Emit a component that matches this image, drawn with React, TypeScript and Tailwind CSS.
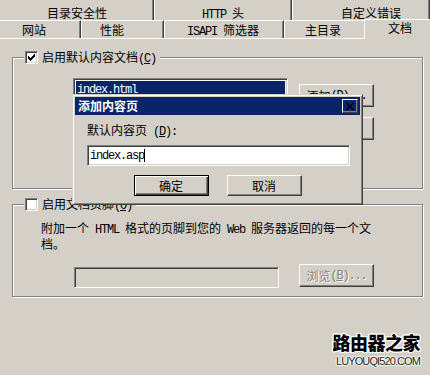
import React from "react";

// Win2000 classic 3D edges
const raised =
  "border border-t-white border-l-white border-r-[#404040] border-b-[#404040] shadow-[inset_-1px_-1px_#808080]";
const defBtn =
  "border border-black shadow-[inset_1px_1px_#fff,inset_-1px_-1px_#404040,inset_-2px_-2px_#808080]";
const sunken =
  "border border-t-[#808080] border-l-[#808080] border-r-white border-b-white shadow-[inset_1px_1px_#404040,inset_-1px_-1px_#d4d0c8]";
const etched = "border border-[#808080] shadow-[inset_1px_1px_#fff,1px_1px_#fff]";
const tabEdge =
  "border-r border-r-[#404040] shadow-[inset_-1px_0_#808080]";

// half-width latin run (SimSun style, 6px per char)
function L({ children }: { children: React.ReactNode }) {
  return (
    <span className="font-['Liberation_Mono',monospace] text-[12px] tracking-[-1.2px]">
      {children}
    </span>
  );
}

function Check({ checked }: { checked?: boolean }) {
  return (
    <div className={`w-[13px] h-[13px] shrink-0 bg-white flex items-center justify-center ${sunken}`}>
      {checked && (
        <svg width="7" height="7" viewBox="0 0 7 7" shapeRendering="crispEdges">
          <path
            d="M0 2h1v3H0zM1 3h1v3H1zM2 4h1v3H2zM3 3h1v3H3zM4 2h1v3H4zM5 1h1v3H5zM6 0h1v3H6z"
            fill="#000"
          />
        </svg>
      )}
    </div>
  );
}

function Btn({
  children,
  className = "",
  isDefault,
  disabled,
}: {
  children: React.ReactNode;
  className?: string;
  isDefault?: boolean;
  disabled?: boolean;
}) {
  return (
    <div
      className={`flex items-center justify-center bg-[#d4d0c8] leading-[12px] whitespace-nowrap ${
        isDefault ? defBtn : raised
      } ${disabled ? "text-[#808080] [text-shadow:1px_1px_0_#fff]" : ""} ${className}`}
    >
      {children}
    </div>
  );
}

export default function App() {
  return (
    <div className="relative w-[430px] h-[375px] overflow-hidden bg-[#d4d0c8] text-black text-[12px] font-['Noto_Sans_CJK_SC',sans-serif]">
      {/* back row of tabs */}
      <div className="flex h-[20px] leading-[12px] whitespace-nowrap">
        <div className={`w-[154px] pl-[47px] pt-[7px] ${tabEdge}`}>目录安全性</div>
        <div className={`w-[138px] pl-[47px] pt-[7px] border-l border-l-white ${tabEdge}`}>
          <L>HTTP </L>头
        </div>
        <div className={`flex-1 pl-[48px] pt-[7px] border-l border-l-white ${tabEdge}`}>自定义错误</div>
      </div>

      {/* front row of tabs */}
      <div className="flex items-end h-[19px] border-b border-white leading-[12px] whitespace-nowrap">
        <div className={`w-[81px] h-full pl-[22px] pt-[3px] border-t border-t-white ${tabEdge}`}>网站</div>
        <div className={`w-[83px] h-full pl-[18px] pt-[3px] border-t border-t-white border-l border-l-white ${tabEdge}`}>
          性能
        </div>
        <div className={`w-[120px] h-full pl-[22px] pt-[3px] border-t border-t-white border-l border-l-white ${tabEdge}`}>
          <L>ISAPI </L>筛选器
        </div>
        <div className={`w-[82px] h-full pl-[20px] pt-[3px] border-t border-t-white border-l border-l-white ${tabEdge}`}>
          主目录
        </div>
        <div className="flex-1 -ml-[2px] h-[20px] -mb-[1px] pl-[23px] pt-[2px] bg-[#d4d0c8] border-t border-t-white border-l border-l-white">
          文档
        </div>
      </div>

      {/* default document group */}
      <div className={`ml-[12px] w-[411px] mt-[18px] h-[132px] ${etched}`}>
        <div className="-mt-[7px] ml-[11px] w-fit h-[13px] flex items-center gap-[4px] bg-[#d4d0c8] pl-[1px] pr-[4px]">
          <Check checked />
          <span className="leading-[12px] whitespace-nowrap">
            启用默认内容文档<L>(<u>C</u>)</L>
          </span>
        </div>
        <div className="flex mt-[14px] ml-[60px] gap-[11px]">
          <div className={`w-[215px] h-[92px] bg-white p-[2px] ${sunken}`}>
            <div className="h-[14px] bg-[#0a246a] text-white pl-[1px] leading-[14px]">
              <L>index.html</L>
            </div>
          </div>
          <div className="flex flex-col gap-[10px] mt-[6px]">
            <Btn className="w-[75px] h-[23px]">
              添加<L>(<u>D</u>)...</L>
            </Btn>
            <Btn className="w-[75px] h-[23px]">
              删除<L>(<u>R</u>)</L>
            </Btn>
          </div>
        </div>
      </div>

      {/* footer group */}
      <div className={`ml-[12px] w-[411px] mt-[15px] h-[93px] ${etched}`}>
        <div className="-mt-[7px] ml-[11px] w-fit h-[13px] flex items-center gap-[4px] bg-[#d4d0c8] pl-[1px] pr-[4px]">
          <Check />
          <span className="leading-[12px] whitespace-nowrap">
            启用文档页脚<L>(<u>O</u>)</L>
          </span>
        </div>
        <p className="ml-[28px] mt-[10px] leading-[13px] whitespace-nowrap">
          附加一个<L> HTML </L>格式的页脚到您的<L> Web </L>服务器返回的每一个文
          <br />
          档。
        </p>
        <div className="flex items-start mt-[14px] ml-[61px] gap-[20px]">
          <div className={`w-[205px] h-[21px] mt-[3px] bg-[#d4d0c8] ${sunken}`} />
          <Btn disabled className="w-[75px] h-[23px]">
            浏览<L>(<u>B</u>)...</L>
          </Btn>
        </div>
      </div>

      {/* modal dialog window */}
      <div className="absolute left-[72px] top-[94px] w-[291px] h-[111px] bg-[#d4d0c8] p-[2px] border border-t-[#d4d0c8] border-l-[#d4d0c8] border-r-[#404040] border-b-[#404040] shadow-[inset_1px_1px_#fff,inset_-1px_-1px_#808080]">
        <div className="h-[18px] bg-[#0a246a] flex items-center justify-between pl-[3px] pr-[2px]">
          <span className="text-white font-bold leading-[12px]">添加内容页</span>
          <div className={`w-[16px] h-[14px] flex items-center justify-center ${raised}`}>
            <svg width="8" height="7" viewBox="0 0 8 7" shapeRendering="crispEdges">
              <path
                d="M0 0h2v1h-2zM6 0h2v1h-2zM1 1h2v1h-2zM5 1h2v1h-2zM2 2h4v1h-4zM3 3h2v1h-2zM2 4h4v1h-4zM1 5h2v1h-2zM5 5h2v1h-2zM0 6h2v1h-2zM6 6h2v1h-2z"
                fill="#000"
              />
            </svg>
          </div>
        </div>
        <div className="mt-[8px] pl-[12px] leading-[13px] whitespace-nowrap">
          默认内容页<L> (<u>D</u>):</L>
        </div>
        <div className={`ml-[12px] mt-[6px] w-[263px] h-[21px] bg-white flex items-center pl-[2px] ${sunken}`}>
          <L>index.asp</L>
          <span className="w-px h-[13px] bg-black" />
        </div>
        <div className="flex justify-center gap-[18px] mt-[9px]">
          <Btn isDefault className="w-[75px] h-[21px]">
            确定
          </Btn>
          <Btn className="w-[75px] h-[21px]">取消</Btn>
        </div>
      </div>

      {/* watermark */}
      <div className="absolute right-[10px] bottom-[7px] flex flex-col items-end">
        <div className="font-black text-[18px] leading-[26px] text-black tracking-[-0.5px] [text-shadow:1px_0_0_#fff,-1px_0_0_#fff,0_1px_0_#fff,0_-1px_0_#fff,1px_1px_0_#fff,-1px_-1px_0_#fff,1px_-1px_0_#fff,-1px_1px_0_#fff]">
          路由器之家
        </div>
        <div className="font-['Liberation_Sans',sans-serif] text-[11px] leading-[13px] tracking-[-0.9px] text-[#1a1a1a] whitespace-nowrap [text-shadow:1px_0_0_#fff,-1px_0_0_#fff,0_1px_0_#fff,0_-1px_0_#fff]">
          LUYOUQI520.COM
        </div>
      </div>
    </div>
  );
}
